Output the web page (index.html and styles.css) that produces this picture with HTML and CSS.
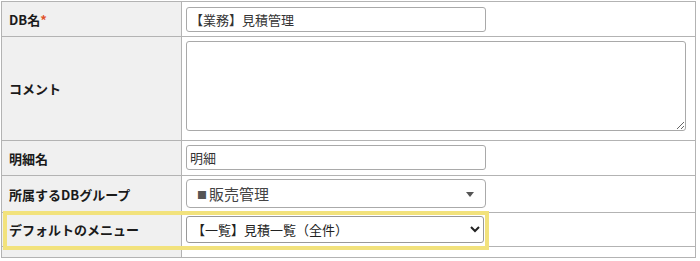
FILE: index.html
```html
<!DOCTYPE html>
<html lang="ja">
<head>
<meta charset="utf-8">
<link rel="stylesheet" href="styles.css">
</head>
<body>
<div class="page">
<table class="form">
  <tr class="r1">
    <th>DB名<span class="req">*</span></th>
    <td><input class="text" type="text" value="【業務】見積管理"></td>
  </tr>
  <tr class="r2">
    <th>コメント</th>
    <td><textarea class="area"></textarea></td>
  </tr>
  <tr class="r3">
    <th>明細名</th>
    <td><input class="text" type="text" value="明細"></td>
  </tr>
  <tr class="r4">
    <th>所属するDBグループ</th>
    <td><div class="s2"><span class="s2-text"><span class="sq">■</span>販売管理</span><span class="s2-arrow"></span></div></td>
  </tr>
  <tr class="r5">
    <th>デフォルトのメニュー</th>
    <td><select class="native"><option>【一覧】見積一覧（全件）</option></select></td>
  </tr>
  <tr class="r6">
    <th></th>
    <td></td>
  </tr>
</table>
<div class="highlight"></div>
</div>
</body>
</html>
```
FILE: styles.css
```css
html, body {
  margin: 0;
  padding: 0;
  background: #ffffff;
  font-family: "Noto Sans CJK JP", "Noto Sans", sans-serif;
  font-size: 13px;
  color: #222;
  overflow: hidden;
}
.page {
  position: relative;
  padding: 1px 0 0 1px;
  height: 260px;
  overflow: hidden;
}
.form {
  border-collapse: collapse;
  width: 695px;
}
.form th, .form td {
  border: 1px solid #b3b3b3;
  vertical-align: middle;
}
.form th {
  width: 172px;
  background: #f0f0f0;
  text-align: left;
  font-weight: bold;
  padding: 0 0 0 7px;
  color: #1a1a1a;
  white-space: nowrap;
}
.form td {
  padding: 0 0 0 4px;
  background: #fff;
}
.req {
  color: #e0542a;
  font-weight: bold;
}
.text {
  display: block;
  box-sizing: border-box;
  width: 300px;
  height: 25px;
  border: 1px solid #a9a9a9;
  border-radius: 3px;
  padding: 0 3px;
  font: inherit;
  color: #333;
  background: #fff;
}
.r1 td { padding-top: 5px; padding-bottom: 4px; }
.r2 td { padding-top: 4px; padding-bottom: 9px; }
.r3 td { padding-top: 4px; padding-bottom: 5px; }
.r4 td { padding-top: 3px; padding-bottom: 4px; }
.r5 td { padding-top: 3px; padding-bottom: 3px; }
.r6 th, .r6 td { height: 10px; }
.area {
  display: block;
  box-sizing: border-box;
  width: 500px;
  height: 90px;
  border: 1px solid #a9a9a9;
  border-radius: 3px;
  font: inherit;
  margin: 0;
}
.s2 {
  box-sizing: border-box;
  width: 300px;
  height: 29px;
  border: 1px solid #aaa;
  border-radius: 4px;
  display: flex;
  align-items: center;
  justify-content: space-between;
  padding: 0 11px 0 10px;
  color: #444;
  font-size: 15px;
}
.sq {
  font-size: 10px;
  color: #555;
  margin-right: 2px;
  position: relative;
  top: -1px;
}
.s2-arrow {
  width: 0;
  height: 0;
  border-left: 4px solid transparent;
  border-right: 4px solid transparent;
  border-top: 5px solid #555;
  margin-top: 1px;
}
.native {
  display: block;
  box-sizing: border-box;
  width: 298px;
  height: 27px;
  border: 1px solid #999;
  border-radius: 3px;
  font: inherit;
  color: #222;
  background: #fff;
  padding: 0 0 0 1px;
  margin: 0;
}
.highlight {
  position: absolute;
  left: 3px;
  top: 211px;
  width: 478px;
  height: 31px;
  border: 4px solid #f2e27c;
  pointer-events: none;
}
```
